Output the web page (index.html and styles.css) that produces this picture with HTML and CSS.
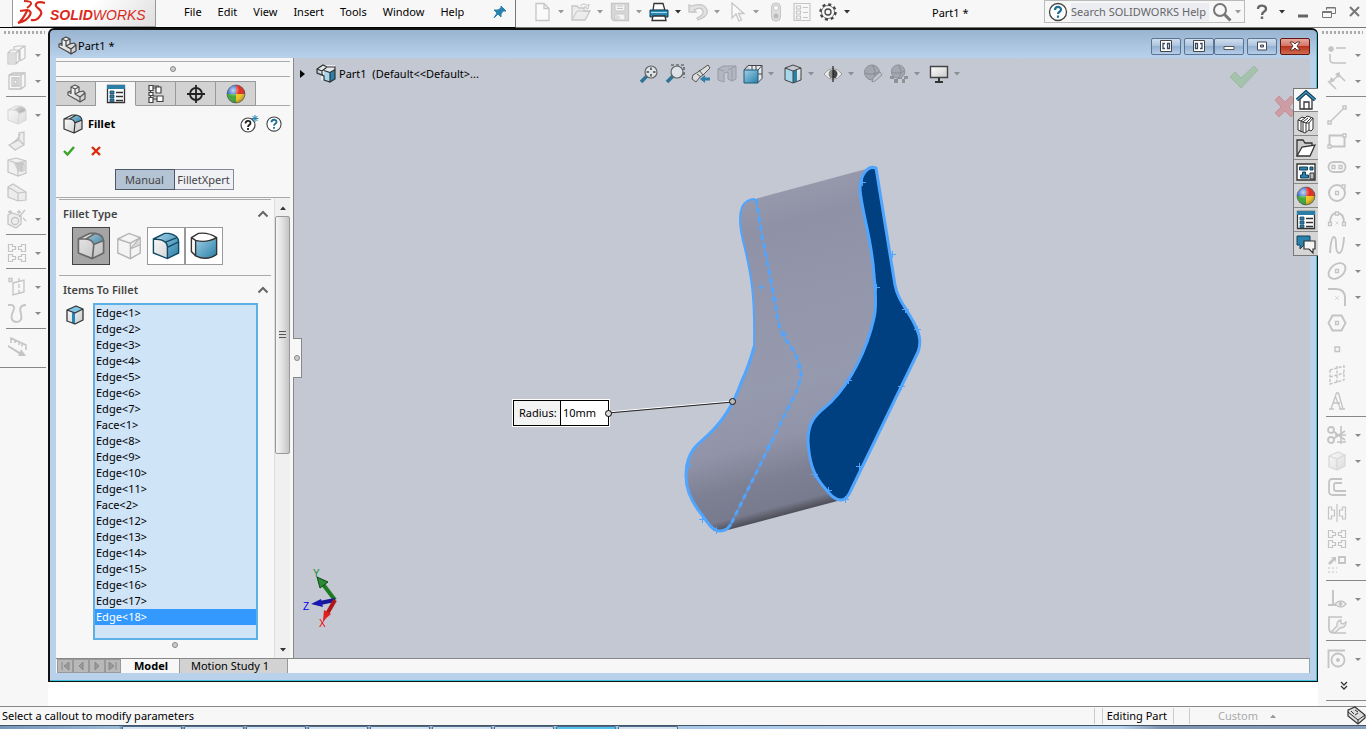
FILE: index.html
```html
<!DOCTYPE html>
<html lang="en">
<head>
    <meta charset="UTF-8">
    <meta name="viewport" content="width=device-width, initial-scale=1.0">
    <title>SOLIDWORKS - Part1 *</title>
    <link rel="stylesheet" href="styles.css">
</head>
<body>
    <!-- icon library -->
    <svg class="defs" width="0" height="0" aria-hidden="true">
        <defs>
            <linearGradient id="blue" x1="0" y1="0" x2="1" y2="1"><stop offset="0" stop-color="#9fd0e6"/><stop offset="1" stop-color="#2a7fa8"/></linearGradient>
            <linearGradient id="grey" x1="0" y1="0" x2="1" y2="1"><stop offset="0" stop-color="#ffffff"/><stop offset="1" stop-color="#c9c9c9"/></linearGradient>
            <radialGradient id="shine" cx=".35" cy=".3" r=".75"><stop offset="0" stop-color="#fff" stop-opacity=".75"/><stop offset=".5" stop-color="#fff" stop-opacity="0"/><stop offset="1" stop-color="#000" stop-opacity=".35"/></radialGradient>
        </defs>
        <symbol id="caret" viewBox="0 0 6 4"><path d="M0 0h6L3 3.500z" fill="currentColor"/></symbol>
        <symbol id="part" viewBox="0 0 20 20"><path d="M2 8l3-1V3l4-2 4 2v5l4-1 2 2v6l-5 3L2 12z" fill="url(#grey)"/><path d="M2 8l3-1V3l4-2 4 2v5l4-1 2 2v6l-5 3-3-2-9-5zM5 3l4 2 4-2M9 5v5l5 3v5M14 13l5-4M9 10l4-2M2 8l3 1.500V7" fill="none" stroke="currentColor" stroke-width="1.200" stroke-linejoin="round"/></symbol>
        <symbol id="fillet" viewBox="0 0 20 20"><path d="M1 5l8-4h4c3 .5 5.500 2 6 5v9l-8 4-10-4z" fill="url(#grey)"/><path d="M7 5l6-4c3 .5 5.500 2 6 5l-7 3C11.500 6.500 9.500 5.500 7 5z" fill="url(#blue)"/><path d="M1 5l8-4h4c3 .5 5.500 2 6 5v9l-8 4-10-4zM1 5h5c4 .3 5.500 2 6 4l7-3M12 9l-1 10M6.500 5L13 1" fill="none" stroke="currentColor" stroke-width="1.200" stroke-linejoin="round"/></symbol>
        <symbol id="cube" viewBox="0 0 20 20"><path d="M2 5l9-4 7 3v11l-8 4-8-3z" fill="url(#grey)"/><path d="M2 5l9-4 7 3v11l-8 4-8-3zM2 5l8 3 8-4M10 8v11" fill="none" stroke="currentColor" stroke-width="1.300" stroke-linejoin="round"/></symbol>
        <symbol id="edge" viewBox="0 0 20 20"><path d="M2 5l9-4 7 3v11l-8 4-8-3z" fill="url(#grey)"/><path d="M2 5l9-4 7 3-8 4z" fill="#7ec5e4"/><path d="M7 7.500l3 .5v11l-3-1z" fill="#2385b8"/><path d="M2 5l9-4 7 3v11l-8 4-8-3zM2 5l8 3 8-4" fill="none" stroke="#333" stroke-width="1.300" stroke-linejoin="round"/></symbol>
        <symbol id="props" viewBox="0 0 20 20"><path d="M1.500 1.500h17v17h-17z" fill="#fff" stroke="#333" stroke-width="1.300"/><path d="M1 1h18v4H1z" fill="#2b7ea6"/><path d="M4 7h4v3H4zM4 11h4v3H4zM4 15h4v2.500H4z" fill="#2b7ea6" stroke="#164b68" stroke-width=".8"/><path d="M10 8.500h7M10 12.500h7M10 16.500h7" stroke="#333" stroke-width="1.300"/></symbol>
        <symbol id="ball" viewBox="0 0 20 20"><circle cx="10" cy="10" r="9" fill="#2b62c9"/><path d="M10 1a9 9 0 0 1 9 9h-9z" fill="#e02a1c"/><path d="M10 10h9a9 9 0 0 1-9 9z" fill="#f2c51b"/><path d="M10 10v9a9 9 0 0 1-9-9z" fill="#3fa535"/><circle cx="10" cy="10" r="9" fill="url(#shine)" stroke="#555" stroke-width=".6"/></symbol>
        <symbol id="quad" viewBox="0 0 20 20"><path d="M1.500 1.500h4v2h3v3h-3v2h-4zM18.500 1.500h-4v2h-3v3h3v2h4zM1.500 11.500h4v2h3v3h-3v2h-4zM18.500 11.500h-4v2h-3v3h3v2h4z" fill="none" stroke="currentColor" stroke-width="1.200"/></symbol>
        <symbol id="help" viewBox="0 0 20 20"><circle cx="10" cy="10" r="8.500" fill="#fff" stroke="#444" stroke-width="1.300"/><path d="M7 8c0-4 6-4 6-.5 0 2.500-3 2-3 4.500M10 13.500v2.200" fill="none" stroke="currentColor" stroke-width="2.200"/></symbol>
        <symbol id="lens" viewBox="0 0 20 20"><path d="M8 12l-6 6" stroke="#2f7396" stroke-width="3.500"/><circle cx="12" cy="8" r="6" fill="#e2e8ee" fill-opacity=".8" stroke="#666" stroke-width="1.200"/></symbol>
        <symbol id="chev" viewBox="0 0 12 8"><path d="M1.500 6.500L6 2l4.500 4.500" fill="none" stroke="#666" stroke-width="2"/></symbol>
        <symbol id="sphere" viewBox="0 0 20 20"><circle cx="9" cy="8.500" r="7.500" fill="#a3a7b0" stroke="#8a8e97"/><path d="M2 9c5 2 10 1 14-1M9 1c4 4 4 11 0 15" fill="none" stroke="#858992"/></symbol>
    </svg>

    <header class="menubar">
        <div class="menus">
            <div class="logo">
                <svg width="30" height="26" viewBox="0 0 30 26" aria-hidden="true"><path d="M7 1q8 0 7 3-1 2-4 4" fill="none" stroke="#da291c" stroke-width="1.800"/><path d="M3 11l7-1q5 1 3 5-3 6-12 8 4-2 9-12M28 3q-7-2-9 1-1 2 3 5 4 3 1 7-3 5-9 4" fill="none" stroke="#da291c" stroke-width="2.200"/></svg>
                <span><b>SOLID</b>WORKS</span>
            </div>
            <nav>
                <button>File</button><button>Edit</button><button>View</button><button>Insert</button><button>Tools</button><button>Window</button><button>Help</button>
            </nav>
            <button class="pin" aria-label="Pin menu"><svg width="14" height="14" viewBox="0 0 14 14"><path d="M8 1l5 5-3 0-2 3 0 3-3-3-4 4 3-5-3-3 4 0 3-2z" fill="#2b83ad" stroke="#2b83ad"/></svg></button>
        </div>
        <div class="quick">
            <button class="off" aria-label="New"><svg class="ic" viewBox="0 0 20 20"><path d="M4 1.500h8l5 5v12H4zM12 1.500v5h5" fill="#fafafa" stroke="currentColor" stroke-width="1.300"/></svg></button><svg class="car"><use href="#caret"/></svg>
            <button class="off" aria-label="Open"><svg class="ic" viewBox="0 0 20 20"><path d="M1 18V4h5l2 2h5v3h6l-5 9z" fill="#ececec" stroke="currentColor" stroke-width="1.300"/><path d="M1 18L6 9h13M9 4q4-4 8 0l1-2-1 5-4-2h3" fill="none" stroke="currentColor"/></svg></button><svg class="car"><use href="#caret"/></svg>
            <button class="off" aria-label="Save"><svg class="ic" viewBox="0 0 20 20"><path d="M1.500 1.500h17v17h-15l-2-2z" fill="#d8d8d8" stroke="currentColor" stroke-width="1.300"/><path d="M5 2h10v7H5zM5 12h10v6H5z" fill="#f4f4f4" stroke="currentColor"/><path d="M7 4h6M7 6.500h6M7 13v5M9 14v3" stroke="currentColor"/></svg></button><svg class="car"><use href="#caret"/></svg>
            <button aria-label="Print"><svg class="ic" viewBox="0 0 20 20"><path d="M5 1.500h9l2 7H4z" fill="#fff" stroke="#333" stroke-width="1.300"/><path d="M1 8h18v7H1z" fill="#2987b2" stroke="#0f4059"/><path d="M2 10.500h16" stroke="#a9dcf0"/><path d="M4 14h12l1 4.500H3z" fill="#fff" stroke="#333" stroke-width="1.300"/></svg></button><svg class="car dark"><use href="#caret"/></svg>
            <button class="off" aria-label="Undo"><svg class="ic" viewBox="0 0 20 20"><path d="M1 3v7l7 0-2-2q8-4 9 1 1 4-6 7l1 2q11-4 9-10-3-8-15-4z" fill="#e3e3e3" stroke="currentColor" stroke-width="1.300"/></svg></button><svg class="car"><use href="#caret"/></svg>
            <button class="off" aria-label="Select"><svg class="ic" viewBox="0 0 20 20"><path d="M5 1v15l4-4 3 7 2.500-1-3-6.500H17z" fill="#fafafa" stroke="currentColor" stroke-width="1.300"/></svg></button><svg class="car"><use href="#caret"/></svg>
            <button class="off gap" aria-label="Rebuild"><svg class="ic" viewBox="0 0 20 20"><rect x="5.500" y="1" width="9" height="18" rx="4" fill="#dedede" stroke="currentColor"/><circle cx="10" cy="6" r="2.500" fill="#fff" stroke="currentColor"/><circle cx="10" cy="14" r="2.500" fill="#bbb"/></svg></button>
            <button class="off gap" aria-label="File properties"><svg class="ic" viewBox="0 0 20 20"><path d="M2 1.500h16v17H2zM4.500 4h4v3h-4zM4.500 9h4v3h-4zM4.500 14h4v3h-4zM11 5.500h5M11 10.500h5M11 15.500h5" fill="none" stroke="currentColor" stroke-width="1.200"/></svg></button>
            <button class="gear" aria-label="Options"><svg class="ic" viewBox="0 0 20 20"><circle cx="10" cy="10" r="7.500" fill="none" stroke="#444" stroke-width="2.400" stroke-dasharray="3 2.890"/><circle cx="10" cy="10" r="6.300" fill="#fff" stroke="#444"/><circle cx="10" cy="10" r="6" fill="#f7f7f7"/><circle cx="10" cy="10" r="3" fill="none" stroke="#444" stroke-width="1.300"/></svg></button><svg class="car dark"><use href="#caret"/></svg>
        </div>
        <div class="doc-name">Part1 *</div>
        <div class="search">
            <svg class="ic" color="#1e6f97"><use href="#help"/></svg>
            <input type="text" placeholder="Search SOLIDWORKS Help" aria-label="Search SOLIDWORKS Help">
            <button aria-label="Search"><svg class="ic" viewBox="0 0 20 20"><circle cx="8" cy="8" r="6" fill="none" stroke="#777" stroke-width="2"/><path d="M12.500 12.500l6 6" stroke="#777" stroke-width="3"/></svg></button>
            <svg class="car"><use href="#caret"/></svg>
        </div>
        <div class="app-buttons">
            <button aria-label="Help"><svg width="12" height="16" viewBox="0 0 12 16"><path d="M2 5c0-5 8-4 8 0 0 3-4 2-4 6M6 12.500V15" fill="none" stroke="#666" stroke-width="2.400"/></svg></button>
            <svg class="car dark"><use href="#caret"/></svg>
            <button aria-label="Minimize"><svg width="14" height="14" viewBox="0 0 14 14"><path d="M2 11h10" stroke="#666" stroke-width="3"/></svg></button>
            <button aria-label="Restore"><svg width="14" height="14" viewBox="0 0 14 14"><path d="M4.500 5V2.500h9v6H10M4 3h9M.5 6.500h9v6h-9zM0 7.500h9" fill="none" stroke="#777"/></svg></button>
            <button aria-label="Close"><svg width="14" height="14" viewBox="0 0 14 14"><path d="M2 2l9 9M11 2l-9 9" stroke="#777" stroke-width="2"/></svg></button>
        </div>
    </header>

    <div class="workspace">
        <aside class="tools left" aria-label="Features">
            <div class="grip"></div>
            <button aria-label="Extruded boss"><svg class="ic" viewBox="0 0 20 20"><path d="M2 9h6v9H2z" fill="#ddd"/><path d="M1 8l3-3h8v11l-3 3H1zM1 8h8v11M9 8l3-3M7 5V2l4-1h7v12l-5 3M13 4v11M13 4l5-3" fill="none" stroke="currentColor" stroke-width="1.200"/></svg></button>
            <button aria-label="Extruded cut"><svg class="ic" viewBox="0 0 20 20"><path d="M2 4l4-2h12v13l-4 3H2zM2 4h12v14M14 4l4-2M5 7h7v8H5zM7 9h3v4H7z" fill="none" stroke="currentColor" stroke-width="1.300"/></svg></button>
            <hr>
            <button aria-label="Fillet"><svg class="ic pale"><use href="#fillet"/></svg></button>
            <button class="solo" aria-label="Rib"><svg class="ic" viewBox="0 0 20 20"><path d="M2 14l10-5V2l5-1v13l-9 5zM2 14l6 5M12 9l5 5M5 12q6-2 8-9" fill="#ececec" stroke="currentColor" stroke-width="1.200"/></svg></button>
            <button class="solo" aria-label="Shell"><svg class="ic" viewBox="0 0 20 20"><path d="M1 3l8-2 10 3v12l-8 3-10-4z" fill="#f0f0f0"/><path d="M7 6l9-2v9l-5 2z" fill="#cfcfcf"/><path d="M1 3l8-2 10 3v12l-8 3-10-4zM1 3l10 4v12M11 7l8-3M14 7.500l3-1v7l-3 1z" fill="none" stroke="currentColor" stroke-width="1.200"/></svg></button>
            <button class="solo" aria-label="Draft"><svg class="ic" viewBox="0 0 20 20"><path d="M1 4l5-3 13 8v8l-8 1-10-4zM1 4l10 6v8M11 10l8-1" fill="#ececec" stroke="currentColor" stroke-width="1.200"/></svg></button>
            <button aria-label="Hole wizard"><svg class="ic" viewBox="0 0 20 20"><path d="M1 6l4-2 9 3v8l-5 4-8-4zM12 8l6-7M3 1v4M1 3h4M12 1v4M10 3h4M16 9l3 3" fill="#eee" stroke="currentColor" stroke-width="1.300"/><circle cx="8" cy="12" r="3.500" fill="none" stroke="currentColor" stroke-width="1.300"/></svg></button>
            <hr>
            <button aria-label="Linear pattern"><svg class="ic"><use href="#quad"/></svg></button>
            <hr>
            <button aria-label="Reference geometry"><svg class="ic" viewBox="0 0 20 20"><path d="M2 1.500h3v3H2zM6 6l11-3v12L6 18z" fill="none" stroke="currentColor" stroke-width="1.300"/><path d="M12 1v18" stroke="currentColor" stroke-width="1.300" stroke-dasharray="4 2"/></svg></button>
            <button aria-label="Curves"><svg class="ic" viewBox="0 0 20 20"><path d="M1 2q7-1 6 4l-2 5q-2 7 4 8 7 0 5-8-3-9 5-9" fill="none" stroke="currentColor" stroke-width="1.800"/></svg></button>
            <hr>
            <button class="solo" aria-label="Instant3D"><svg class="ic" viewBox="0 0 20 20"><path d="M4 6V1l15 7v5M8 3v3M12 5v3M15 6.500v3" fill="none" stroke="currentColor" stroke-width="1.500"/><path d="M1 8l12 7 1-3 5 7-8 0 1-2L1 10z" fill="currentColor"/></svg></button>
            <hr class="wide">
        </aside>

        <main class="doc">
            <div class="title">
                <svg class="ic" color="#444"><use href="#part"/></svg>
                <h1>Part1 *</h1>
                <div class="win-buttons">
                    <button class="lone" aria-label="Pane left"><svg width="14" height="14" viewBox="0 0 14 14"><path d="M1.500 1.500h11v11h-11z" fill="#fff" stroke="#444"/><path d="M6 4.500H4v5h2M8.500 4.500h2v5h-2z" fill="none" stroke="#3a4a62" stroke-width="1.300"/></svg></button>
                    <button aria-label="Pane right"><svg width="14" height="14" viewBox="0 0 14 14"><path d="M1.500 1.500h11v11h-11z" fill="#fff" stroke="#444"/><path d="M8 4.500h2v5H8M3.500 4.500h2v5h-2z" fill="none" stroke="#3a4a62" stroke-width="1.300"/></svg></button>
                    <button aria-label="Minimize document"><svg width="14" height="14" viewBox="0 0 14 14"><path d="M2 7.500h10v3H2z" fill="#fff" stroke="#555"/></svg></button>
                    <button class="max" aria-label="Maximize document"><svg width="14" height="14" viewBox="0 0 14 14"><path d="M2.500 3h9v8h-9zM5.500 6h3v2h-3z" fill="#fff" fill-rule="evenodd" stroke="#445"/></svg></button>
                    <button class="shut" aria-label="Close document"><svg width="14" height="14" viewBox="0 0 14 14"><path d="M2 3h3l2 2 2-2h3L9 7l3 4H9L7 9l-2 2H2l3-4z" fill="#fff" stroke="#5a3535"/></svg></button>
                </div>
            </div>

            <div class="split">
                <section class="panel">
                    <div class="handle"><i></i></div>
                    <div class="tabs" role="tablist">
                        <button role="tab" aria-label="Feature tree"><svg class="ic" color="#555"><use href="#part"/></svg></button>
                        <button role="tab" class="on" aria-label="Property manager"><svg class="ic"><use href="#props"/></svg></button>
                        <button role="tab" aria-label="Configurations"><svg class="ic" viewBox="0 0 20 20"><path d="M4.500 1v18M4.500 4h7M4.500 15h7" fill="none" stroke="#444" stroke-width="1.200"/><path d="M3 1.500h4v5H3zM3 8.500h4v3H3zM3 13.500h4v5H3zM10 3h5v6h-5zM11 12h6v5.500h-6z" fill="#fff" stroke="#444" stroke-width="1.200"/><path d="M7 2h6v1M7 12h3" fill="none" stroke="#444"/></svg></button>
                        <button role="tab" aria-label="Dimensions"><svg class="ic" viewBox="0 0 20 20"><circle cx="10" cy="10" r="6" fill="none" stroke="#222" stroke-width="1.800"/><path d="M10 1v18M1 10h18" stroke="#222" stroke-width="1.800"/></svg></button>
                        <button role="tab" aria-label="Display"><svg class="ic"><use href="#ball"/></svg></button>
                    </div>
                    <div class="feature">
                        <svg class="ic" color="#333"><use href="#fillet"/></svg>
                        <h2>Fillet</h2>
                        <button aria-label="What's new"><svg class="ic" viewBox="0 0 20 20"><circle cx="9" cy="11" r="7" fill="#fff" stroke="#444" stroke-width="1.200"/><path d="M6.500 9.500c0-3.500 5-3.500 5-.5 0 2-2.500 2-2.500 4M9 14v2" fill="none" stroke="#222" stroke-width="1.800"/><path d="M16 1v7M12.500 4.500h7M13.500 2l5 5M18.500 2l-5 5" stroke="#1e7fae"/></svg></button>
                        <button aria-label="Fillet help"><svg class="ic" color="#1e6f97" viewBox="-2 -2 24 24"><use href="#help" width="20" height="20"/></svg></button>
                    </div>
                    <div class="confirm">
                        <button aria-label="OK"><svg width="12" height="12" viewBox="0 0 12 12"><path d="M1 6l3.500 3.500L11 2" fill="none" stroke="#3aa226" stroke-width="2.400"/></svg></button>
                        <button aria-label="Cancel"><svg width="12" height="12" viewBox="0 0 12 12"><path d="M2 2l8 8M10 2l-8 8" stroke="#dd2b0d" stroke-width="2.400"/></svg></button>
                    </div>
                    <div class="mode">
                        <button class="on">Manual</button><button>FilletXpert</button>
                    </div>
                    <div class="scroll">
                        <div class="groups">
                            <div class="group">
                                <h3>Fillet Type <svg width="12" height="8"><use href="#chev"/></svg></h3>
                                <div class="types">
                                    <button class="on" aria-label="Constant size fillet"><svg color="#555"><use href="#fillet"/></svg></button>
                                    <button class="flat" aria-label="Variable size fillet"><svg viewBox="0 0 20 20"><path d="M2 5l8-4 8 3v11l-7 4-9-4zM2 5l9 3 7-4-7 8 7-3" fill="#f4f4f4" stroke="#b5b5b5"/><path d="M11 8v11" stroke="#b5b5b5"/><path d="M11 11q4-2 6-6v4z" fill="#d5d5d5"/></svg></button>
                                    <button aria-label="Face fillet"><svg viewBox="0 0 20 20"><path d="M1 5l8-4h3l7 5v9l-8 4-10-4z" fill="url(#grey)"/><path d="M3 4l6-3h3c5 1 7 3 7 6v8l-8 4v-8C11 7 8 4.500 3 4z" fill="url(#blue)"/><path d="M1 5l8-4h3c5 1 7 3 7 6v8l-8 4-10-4zM1 5c7 0 10 2 10 6v8M11 11l8-4M10 7l8-3" fill="none" stroke="#124a66"/></svg></button>
                                    <button aria-label="Full round fillet"><svg viewBox="0 0 20 20"><path d="M1 4l5-3q7-1 13 3v12q-7 5-15 1l-3-3z" fill="#fff"/><path d="M4 6q7 2 15-2v12q-7 5-15 1z" fill="url(#blue)"/><path d="M1 4l5-3q7-1 13 3v12q-7 5-15 1l-3-3zM1 4l3 2v11M4 6q8 2 15-2" fill="none" stroke="#333"/></svg></button>
                                </div>
                            </div>
                            <div class="group items">
                                <h3><label for="edges">Items To Fillet</label> <svg width="12" height="8"><use href="#chev"/></svg></h3>
                                <div class="pick">
                                    <svg class="ic"><use href="#edge"/></svg>
                                    <select id="edges" multiple>
                                        <option>Edge&lt;1&gt;</option>
                                        <option>Edge&lt;2&gt;</option>
                                        <option>Edge&lt;3&gt;</option>
                                        <option>Edge&lt;4&gt;</option>
                                        <option>Edge&lt;5&gt;</option>
                                        <option>Edge&lt;6&gt;</option>
                                        <option>Edge&lt;7&gt;</option>
                                        <option>Face&lt;1&gt;</option>
                                        <option>Edge&lt;8&gt;</option>
                                        <option>Edge&lt;9&gt;</option>
                                        <option>Edge&lt;10&gt;</option>
                                        <option>Edge&lt;11&gt;</option>
                                        <option>Face&lt;2&gt;</option>
                                        <option>Edge&lt;12&gt;</option>
                                        <option>Edge&lt;13&gt;</option>
                                        <option>Edge&lt;14&gt;</option>
                                        <option>Edge&lt;15&gt;</option>
                                        <option>Edge&lt;16&gt;</option>
                                        <option>Edge&lt;17&gt;</option>
                                        <option selected>Edge&lt;18&gt;</option>
                                    </select>
                                </div>
                                <i class="dot"></i>
                            </div>
                        </div>
                        <div class="bar">
                            <svg class="car dark up"><use href="#caret"/></svg>
                            <div class="thumb"><i></i></div>
                            <svg class="car dark"><use href="#caret"/></svg>
                        </div>
                    </div>
                    <button class="splitter" aria-label="Collapse panel"><i></i></button>
                </section>

                <section class="view">
                    <svg class="model" aria-label="Fillet preview">
                        <defs>
                            <linearGradient id="body" gradientUnits="userSpaceOnUse" x1="755" y1="199" x2="835" y2="501">
                                <stop offset="0" stop-color="#9698ab"/><stop offset=".1" stop-color="#8f92a6"/><stop offset=".3" stop-color="#9396aa"/><stop offset=".6" stop-color="#969aaf"/><stop offset=".76" stop-color="#9194a8"/><stop offset=".88" stop-color="#7d7f92"/><stop offset=".97" stop-color="#787a8d"/><stop offset="1.020" stop-color="#505059"/>
                            </linearGradient>
                        </defs>
                        <g transform="translate(-294 -58)">
                            <path fill="url(#body)" d="M755 199L870 168L878 300L845 499L724 531C711 531 706 519 699 511C690 499 686 488 686 476C686 463 689 453 697 445L709 434C725 419 735 400 741 383Q749 366 754 347C755 300 752 277 744 245C740 230 738 217 742 207Q746 199 755 199Z"/>
                            <path fill="none" stroke="#50a5ff" stroke-width="2" d="M755 199Q746 199 742 207C738 217 740 230 744 245C752 277 755 300 754 347"/>
                            <path fill="none" stroke="#50a5ff" stroke-width="3" d="M754 347Q749 366 741 383C735 400 725 419 709 434L697 445C689 453 686 463 686 476C686 488 690 499 699 511C706 519 711 531 720 531Q727 531 731 524"/>
                            <path fill="none" stroke="#50a5ff" d="M756 199L762 235L772 287C777 311 777 328 786 340C796 352 800 364 801 374Q800 386 791 402L731 524"/>
                            <path fill="none" stroke="#50a5ff" stroke-width="3" stroke-dasharray="5 4" d="M756 199L762 235L772 287C777 311 777 328 786 340C796 352 800 364 801 374Q800 386 791 402L731 524"/>
                            <path fill="#004080" stroke="#50a5ff" stroke-width="3" stroke-linejoin="round" d="M876 168C868 165 860 174 860 190C862 213 872 240 874 275C876 295 876 310 874 318C867 350 850 383 831 402C819 413 808 418 808 441C809 461 813 474 823 486C830 494 834 500 841 500Q847 500 851 490L903 383L918 352C922 341 919 333 914 323C905 306 898 300 895 285Z"/>
                            <path fill="none" stroke="#50a5ff" d="M859 182.500h7m-3.500-3.500v7M889 254.500h7m-3.500-3.500v7M873 287.500h7m-3.500-3.500v7M902 309.500h7m-3.500-3.500v7M914 329.500h7m-3.500-3.500v7M758 287.500h7m-3.500-3.500v7M771 299.500h7m-3.500-3.500v7M781 334.500h7m-3.500-3.500v7M795 366.500h7m-3.500-3.500v7M765 446.500h7m-3.500-3.500v7M845 380.500h7m-3.500-3.500v7M898 386.500h7m-3.500-3.500v7M856 466.500h7m-3.500-3.500v7M811 474.500h7m-3.500-3.500v7M825 490.500h7m-3.500-3.500v7M842 499.500h7m-3.500-3.500v7M685 465.500h7m-3.500-3.500v7M699 519.500h7m-3.500-3.500v7M713 530.500h7m-3.500-3.500v7"/>
                            <path d="M608 412L733 401" stroke="#fff"/><path d="M608 413L733 402" stroke="#222"/>
                            <circle cx="732.500" cy="401.500" r="3" fill="#bbb" stroke="#111"/>
                            <!-- origin triad -->
                            <path d="M335 600L322 583" stroke="#1c7a22" stroke-width="4"/><path d="M317 577l11 5-8 6z" fill="#2c8a35" stroke="#0c4a12"/>
                            <path d="M335 600L320 603" stroke="#16169a" stroke-width="4"/><path d="M311 604l10-5 2 8z" fill="#1818b0"/>
                            <path d="M335 600L327 614" stroke="#b01818" stroke-width="4"/><path d="M323 621l1-11 7 4z" fill="#e01f1f"/>
                            <g class="axes"><text x="313" y="577" fill="#17911d">Y</text><text x="303" y="610" fill="#0000f0">Z</text><text x="319" y="627" fill="#f00000">X</text></g>
                        </g>
                    </svg>
                    <div class="hud">
                        <div class="tree">
                            <svg class="arrow" viewBox="0 0 5 8"><path d="M0 0l5 4-5 4z"/></svg>
                            <svg class="ic" viewBox="0 0 20 20" color="#333"><path d="M1 5l7-4h11v13l-5 4-9-2V9z" fill="#e6eaef"/><path d="M8 7l6 2v9l-6-2z" fill="#a8d7ec"/><path d="M14 9l5-3v9l-5 3z" fill="#2980aa"/><path d="M1 5l6-4 4 2h8v12l-5 3-6-2v-4l-7-3zM1 5l5 2 5-4M6 7v4M8 6.500l6 2 5-3M14 9v9" fill="none" stroke="#333" stroke-width="1.200"/></svg>
                            <span>Part1&nbsp; (Default&lt;&lt;Default&gt;...</span>
                        </div>
                        <div class="heads">
                            <button aria-label="Zoom to fit"><svg class="ic" viewBox="0 0 20 20"><use href="#lens" width="20" height="20"/><path d="M12 3.500v9M7.500 8h9" stroke="#444" stroke-width="1.500" stroke-dasharray="2.500 4 2.500"/></svg></button>
                            <button aria-label="Zoom to area"><svg class="ic" viewBox="0 0 20 20"><path d="M6 1h13v13" fill="none" stroke="#444" stroke-width="1.200" stroke-dasharray="3 2"/><use href="#lens" width="20" height="20"/></svg></button>
                            <button aria-label="Previous view"><svg class="ic" viewBox="0 0 20 20"><path d="M2 11l5-3L17 1l2 3-7 7-3 2-4 5-4-3z" fill="#ddd" stroke="#555"/><path d="M8 6l4 5M6 10l4 3" stroke="#555"/><path d="M9 15l5-4v2.500h5v3h-5V19z" fill="#2f7fa8"/></svg></button>
                            <button aria-label="Section view"><svg class="ic" viewBox="0 0 20 20"><path d="M1 5l5-3h13v13l-4 2-4-2V8l-4 1v9l-6-2zM1 5l6 2M11 6l4-2 4-2M15 5v12" fill="#b3b7c1" stroke="#989ca6"/></svg></button>
                            <button aria-label="View orientation"><svg class="ic" viewBox="0 0 20 20"><path d="M5 1.500h14v13l-4 4M5 1.500L1 6M19 1.500L15 6M9 1v5M13 1v8M15 10h4" fill="#e6e9ee" stroke="#444"/><path d="M1 6h14v13H1z" fill="url(#blue)" stroke="#1d5878"/></svg></button><svg class="car"><use href="#caret"/></svg>
                            <button aria-label="Display style"><svg class="ic" viewBox="0 0 20 20"><path d="M2 4l8 3v12l-8-3z" fill="#a8d7ec"/><path d="M10 7l8-3v12l-8 3z" fill="url(#grey)"/><path d="M10 7l4-1.500v12L10 19z" fill="#2980aa"/><path d="M2 4l8-3 8 3v12l-8 3-8-3zM2 4l8 3 8-3M10 7v12" fill="none" stroke="#444"/></svg></button><svg class="car"><use href="#caret"/></svg>
                            <button aria-label="Hide or show"><svg class="ic" viewBox="0 0 20 20"><path d="M1 10q9-11 18 0-9 11-18 0z" fill="#eee" stroke="#999"/><path d="M10 5.500a4.500 4.500 0 0 0 0 9z" fill="#888"/><path d="M10 5.500a4.500 4.500 0 0 1 0 9z" fill="#444"/><path d="M10 2v16" stroke="#222" stroke-width="1.200"/></svg></button><svg class="car"><use href="#caret"/></svg>
                            <button aria-label="Edit appearance"><svg class="ic" viewBox="0 0 20 20"><use href="#sphere" width="20" height="20"/><path d="M9 18l1-4 7-6 2 3-7 6z" fill="#c1c4cc" stroke="#8f939c"/></svg></button>
                            <button aria-label="Apply scene"><svg class="ic" viewBox="0 0 20 20"><path d="M1 12h18v7H1z" fill="#c8cbd2"/><path d="M1 12h4v3H1zM9 12h4v3H9zM15 12h4v3h-4zM5 15h4v4H5zM13 15h3v4h-3z" fill="#8e929b"/><use href="#sphere" x="1" width="18" height="18"/></svg></button><svg class="car"><use href="#caret"/></svg>
                            <button aria-label="View settings"><svg class="ic" viewBox="0 0 20 20"><path d="M1.500 2.500h17v11h-17z" fill="url(#grey)" stroke="#444" stroke-width="1.400"/><path d="M10 14v4M6 18h8" stroke="#333" stroke-width="2"/></svg></button><svg class="car"><use href="#caret"/></svg>
                        </div>
                    </div>
                    <div class="callout">
                        <label for="radius">Radius:</label><input id="radius" type="text" value="10mm">
                        <i></i>
                    </div>
                    <button class="accept" aria-label="Accept"><svg width="30" height="24" viewBox="0 0 30 24"><path d="M1 12l5-5 6 6L25 1l4 4-17 18z" fill="#a5c2ac" stroke="#9bbaa2"/></svg></button>
                    <button class="reject" aria-label="Reject"><svg width="26" height="26" viewBox="0 0 26 26"><path d="M2 6l4-4 6 6 6-6 4 4-6 7 6 6-4 4-6-6-6 6-4-4 6-6z" fill="#cc9da4" stroke="#c59098"/></svg></button>
                </section>

                <nav class="taskpane" aria-label="Task pane">
                    <button class="on" aria-label="Resources"><svg class="ic" viewBox="0 0 20 20"><path d="M4 9v10h12V9l-6-6z" fill="#fff" stroke="#333" stroke-width="1.300"/><path d="M8 19v-7h5v7" fill="none" stroke="#333" stroke-width="1.300"/><path d="M1 10l9-8 9 8" fill="none" stroke="#12405a" stroke-width="3.500"/><path d="M1 10l9-8 9 8" fill="none" stroke="#4499c0" stroke-width="1.300"/></svg></button>
                    <button aria-label="Design library"><svg class="ic" viewBox="0 0 20 20"><path d="M2 6l9-4 6 1v12l-8 4-7-3z" fill="#fff"/><path d="M2 6l4-3 3 1 2-2 6 2v11l-2 2-2-1-4 3-7-3zM2 6l3 1v11M5 7l4-3M5 7l2 1v10M7 8l5-4M7 8l3 1v9M10 9l5-5M10 9l3 0v7M13 9l4-5" fill="none" stroke="#333"/></svg></button>
                    <button aria-label="File explorer"><svg class="ic" viewBox="0 0 20 20"><path d="M1 18V2h6l2 3h7v3" fill="#ccc" stroke="#333" stroke-width="1.300"/><path d="M1 18L6 9l13-2-5 11z" fill="#fff" stroke="#333" stroke-width="1.300"/></svg></button>
                    <button aria-label="View palette"><svg class="ic" viewBox="0 0 20 20"><path d="M1 2h18v16H1z" fill="#fff" stroke="#333" stroke-width="1.400"/><path d="M3.500 5h8v3h-8zM14 5h3v3h-3zM6.500 10h3v3h3v3h-8v-3h2z" fill="#2b83ad" stroke="#153f57"/><path d="M14 11h4v6h-4z" fill="#bbb" stroke="#333"/></svg></button>
                    <button aria-label="Appearances"><svg class="ic"><use href="#ball"/></svg></button>
                    <button aria-label="Custom properties"><svg class="ic"><use href="#props"/></svg></button>
                    <button aria-label="Forum"><svg class="ic" viewBox="0 0 20 20"><path d="M1 2h13v9H8l-4 4v-4H1z" fill="#2b83ad" stroke="#153f57"/><path d="M8 7h11v8h-2v4l-4-4H8z" fill="#f4f4f4" stroke="#333" stroke-width="1.200"/></svg></button>
                </nav>
            </div>

            <footer class="sheets">
                <div class="steps">
                    <button aria-label="First"><svg viewBox="0 0 12 12"><path d="M3 2v8M10 2L5 6l5 4z"/></svg></button><button aria-label="Previous"><svg viewBox="0 0 12 12"><path d="M8 2L4 6l4 4z"/></svg></button><button aria-label="Next"><svg viewBox="0 0 12 12"><path d="M4 2l4 4-4 4z"/></svg></button><button aria-label="Last"><svg viewBox="0 0 12 12"><path d="M9 2v8M2 2l5 4-5 4z"/></svg></button>
                </div>
                <button class="sheet on">Model</button>
                <button class="sheet">Motion Study 1</button>
            </footer>
        </main>

        <aside class="tools right" aria-label="Sketch">
            <div class="grip"></div>
            <button aria-label="Sketch"><svg class="ic" viewBox="0 0 20 20"><path d="M1 4h6M4 1v6M2 2l4 4M6 2L2 6M9 3h10M3 9v5q0 4 4 4h12" fill="none" stroke="currentColor" stroke-width="1.600"/></svg></button>
            <button aria-label="Smart dimension"><svg class="ic" viewBox="0 0 20 20"><path d="M1 10l8 8M10 2l8 8M5 10l7-6" fill="none" stroke="currentColor" stroke-width="1.600"/><path d="M2 12l2-6 4 4zM13 1l-1 6-4-4z" fill="currentColor"/></svg></button>
            <hr>
            <button aria-label="Line"><svg class="ic" viewBox="0 0 20 20"><path d="M4 16L16 4M1 16h3v3H1zM16 1h3v3h-3z" fill="none" stroke="currentColor" stroke-width="1.500"/></svg></button>
            <button aria-label="Rectangle"><svg class="ic" viewBox="0 0 20 20"><path d="M2.500 4.500h15v11h-15z" fill="none" stroke="currentColor" stroke-width="1.900"/><path d="M1 14h3v3H1zM16 3h3v3h-3z" fill="#fff" stroke="currentColor" stroke-width="1.300"/></svg></button>
            <button aria-label="Slot"><svg class="ic" viewBox="0 0 20 20"><rect x="1.500" y="5" width="17" height="10" rx="5" fill="none" stroke="currentColor" stroke-width="1.900"/><path d="M5 8.500h3v3H5zM12 8.500h3v3h-3z" fill="none" stroke="currentColor" stroke-width="1.300"/></svg></button>
            <button aria-label="Circle"><svg class="ic" viewBox="0 0 20 20"><circle cx="10" cy="10" r="8" fill="none" stroke="currentColor" stroke-width="1.900"/><path d="M8.500 8.500h3v3h-3zM15 2h3v3h-3z" fill="#fff" stroke="currentColor" stroke-width="1.300"/></svg></button>
            <button aria-label="Arc"><svg class="ic" viewBox="0 0 20 20"><path d="M3 14q0-10 7-10t7 10" fill="none" stroke="currentColor" stroke-width="1.900"/><path d="M1.500 13.500h3v3h-3zM15.500 13.500h3v3h-3zM8.500 3h3v3h-3z" fill="#fff" stroke="currentColor" stroke-width="1.300"/><path d="M8.500 12.500l3 3M11.500 12.500l-3 3" stroke="currentColor" stroke-width=".6"/></svg></button>
            <button aria-label="Spline"><svg class="ic" viewBox="0 0 20 20"><path d="M3 18Q4 2 7 2q2 0 2 7 0 9 3 9 4 0 5-16" fill="none" stroke="currentColor" stroke-width="1.900"/></svg></button>
            <button aria-label="Ellipse"><svg class="ic" viewBox="0 0 20 20"><ellipse cx="10" cy="10" rx="9.500" ry="6.500" transform="rotate(-40 10 10)" fill="none" stroke="currentColor" stroke-width="1.900"/><path d="M8.500 8.500h3v3h-3z" fill="none" stroke="currentColor" stroke-width="1.300"/></svg></button>
            <button aria-label="Sketch fillet"><svg class="ic" viewBox="0 0 20 20"><path d="M1 2h8q9 0 9 9v8" fill="none" stroke="currentColor" stroke-width="2"/><path d="M8 9l4 4M12 9l-4 4" stroke="currentColor" stroke-width=".6"/></svg></button>
            <button class="solo" aria-label="Polygon"><svg class="ic" viewBox="0 0 20 20"><path d="M5.500 2.500h9l4 7.500-4 7.500h-9L1.500 10z" fill="none" stroke="currentColor" stroke-width="1.900"/><path d="M8.500 8.500h3v3h-3z" fill="none" stroke="currentColor" stroke-width="1.300"/></svg></button>
            <button class="solo" aria-label="Point"><svg class="ic" viewBox="0 0 20 20"><path d="M8 8h4.500v4.500H8z" fill="none" stroke="currentColor" stroke-width="1.400"/></svg></button>
            <button class="solo" aria-label="Plane"><svg class="ic" viewBox="0 0 20 20"><path d="M3 5l14-4v14L3 19zM10 1v18M3 12l14-4" fill="none" stroke="currentColor" stroke-width="1.400" stroke-dasharray="3 1.500"/></svg></button>
            <button class="solo" aria-label="Text"><svg class="ic" viewBox="0 0 20 20"><path d="M2 18h5M12 18h6M4 18L9.500 2h2L16 18M6 12h7M8.500 6l5 12" fill="none" stroke="currentColor" stroke-width="1.300"/></svg></button>
            <hr>
            <button aria-label="Trim"><svg class="ic" viewBox="0 0 20 20"><circle cx="4" cy="5" r="3" fill="none" stroke="currentColor" stroke-width="1.800"/><circle cx="4" cy="15" r="3" fill="none" stroke="currentColor" stroke-width="1.800"/><path d="M6 6l12 9M6 14L18 6M14 1v18M8 10h11M10 17h9" stroke="currentColor" stroke-width="1.600"/></svg></button>
            <button aria-label="Convert entities"><svg class="ic pale"><use href="#cube"/></svg></button>
            <button class="solo" aria-label="Offset"><svg class="ic" viewBox="0 0 20 20"><path d="M15 2H5Q2 2 2 6v8q0 4 4 4h13M15 6H9Q7 6 7 8v4q0 2 2 2h10" fill="none" stroke="currentColor" stroke-width="1.800"/></svg></button>
            <button class="solo" aria-label="Mirror"><svg class="ic" viewBox="0 0 20 20"><path d="M10 1v18M1.500 4h3v3h3v6h-3v3h-3zM18.500 4h-3v3h-3v6h3v3h3z" fill="none" stroke="currentColor" stroke-width="1.200"/></svg></button>
            <button aria-label="Sketch pattern"><svg class="ic"><use href="#quad"/></svg></button>
            <button aria-label="Move entities"><svg class="ic" viewBox="0 0 20 20"><path d="M12 2h6v6h-6z" fill="none" stroke="currentColor" stroke-width="1.800"/><path d="M1 8l5-5-3-1h6v6L8 5 3 10z" fill="currentColor"/><path d="M1 13h9M1 17h9" stroke="currentColor" stroke-width="2" stroke-dasharray="2 2" opacity=".5"/></svg></button>
            <hr>
            <button aria-label="Relations"><svg class="ic" viewBox="0 0 20 20"><path d="M6 1v15M1 16h8" fill="none" stroke="currentColor" stroke-width="1.900"/><path d="M8 15q6-6 11 0-5 6-11 0z" fill="none" stroke="currentColor" stroke-width="1.500"/><circle cx="13.500" cy="15" r="2" fill="currentColor"/></svg></button>
            <button class="solo" aria-label="Repair sketch"><svg class="ic" viewBox="0 0 20 20"><path d="M15 2H2v11q0 5 5 5h12" fill="none" stroke="currentColor" stroke-width="1.700"/><path d="M5 16l5-5q-1-5 4-6v3l2 1 3-2q0 6-6 6l-5 5z" fill="#eee" stroke="currentColor" stroke-width="1.300"/></svg></button>
            <hr>
            <button aria-label="Quick snaps"><svg class="ic" viewBox="0 0 20 20"><path d="M1.500 19V1.500H18" fill="none" stroke="currentColor" stroke-width="1.800"/><circle cx="11" cy="11" r="6.500" fill="none" stroke="currentColor" stroke-width="1.800"/><circle cx="11" cy="11" r="2" fill="currentColor"/></svg></button>
            <button class="more" aria-label="More"><svg width="8" height="10" viewBox="0 0 8 10"><path d="M1 1l3 3 3-3M1 5l3 3 3-3" fill="none" stroke="#333" stroke-width="1.300"/></svg></button>
            <hr class="last">
        </aside>
    </div>

    <footer class="status">
        <span class="hint">Select a callout to modify parameters</span>
        <span class="cell empty"></span>
        <span class="cell">Editing Part</span>
        <span class="cell empty"></span>
        <button class="cell units">Custom <svg class="car up"><use href="#caret"/></svg></button>
        <button class="tag" aria-label="Tags"><svg class="ic" viewBox="0 0 20 20"><path d="M2 4l7-3 10 8v3l-7 6L2 10z" fill="#ddd" stroke="#333" stroke-width="1.200"/><path d="M2 6l10 8 7-5M12 14v4M5 5l3 3M9 4l3 2M9 9l3-2" fill="none" stroke="#333"/></svg></button>
    </footer>
    <div class="taskbar"><i class="start"></i><i></i><i></i><i></i><i></i><i></i><i></i><i></i><i class="lit"></i><i></i></div>
</body>
</html>
```

FILE: styles.css
```css
* {
    box-sizing: border-box;
}
body {
    margin: 0;
    min-height: 100vh;
    display: flex;
    flex-direction: column;
    background: #fff;
    color: #000;
    font-family: "Noto Sans", "Open Sans", sans-serif;
    font-size: 11px;
    line-height: 16px;
    overflow: hidden;
}
button {
    display: flex;
    align-items: center;
    justify-content: center;
    flex: none;
    margin: 0;
    padding: 0;
    border: 0;
    background: none;
    font: inherit;
    color: inherit;
}
input {
    font: inherit;
    border: 0;
    padding: 0;
    min-width: 0;
}
svg {
    display: block;
    flex: none;
}
.defs {
    position: absolute;
}
h1, h2, h3 {
    margin: 0;
    font-size: 11px;
    font-weight: normal;
}
.ic {
    width: 20px;
    height: 20px;
}
.car {
    width: 6px;
    height: 4px;
    color: #999;
}
.car.dark {
    color: #333;
}
.up {
    transform: rotate(180deg);
}
.off {
    color: #c6c6c6;
}

/* menu bar */
.menubar {
    display: flex;
    align-items: center;
    height: 28px;
    background: #f7f7f7;
    border-bottom: 1px solid #777;
}
.menus {
    display: flex;
    align-items: center;
    height: 28px;
    width: 516px;
    padding: 0 8px 2px 12px;
    border-right: 1px solid #777;
    border-bottom: 1px solid #000;
}
.logo {
    display: flex;
    align-items: center;
    gap: 3px;
    width: 144px;
    height: 27px;
    margin-bottom: -2px;
    padding-left: 4px;
    border: solid #999;
    border-width: 0 1px 1px;
    background: linear-gradient(135deg, #fff 50%, #dedede);
    color: #da291c;
    font-family: "Liberation Sans", sans-serif;
    font-size: 14px;
    font-style: italic;
}
.logo span {
    padding-top: 4px;
}
.menus nav {
    display: flex;
    gap: 16px;
    flex: 1;
    padding-left: 28px;
}
.quick {
    display: flex;
    align-items: center;
    height: 24px;
    padding: 0 0 3px 16px;
}
.quick .car {
    margin: 0 7px 0 6px;
}
.quick .gap {
    margin-right: 6px;
}
.doc-name {
    flex: 1;
    padding: 0 0 2px 75px;
}
.search {
    display: flex;
    align-items: center;
    gap: 3px;
    height: 23px;
    width: 201px;
    margin-bottom: 4px;
    padding: 0 3px;
    border: 1px solid #bbb;
}
.search input {
    flex: 1;
    height: 18px;
    background: #ebedf2;
}
.search input::placeholder {
    color: #666;
}
.app-buttons {
    display: flex;
    align-items: center;
    gap: 12px;
    padding: 0 4px 3px 11px;
}
.app-buttons .car {
    margin: 0 -1px;
}

/* side toolbars */
.workspace {
    display: flex;
    flex: 1;
}
.tools {
    flex: none;
    width: 48px;
    background: #f7f7f7;
    color: #c4c4c4;
}
.tools button {
    justify-content: flex-start;
    width: 100%;
    height: 26px;
    padding-left: 7px;
}
.tools.right button {
    padding-left: 9px;
}
.tools button::after {
    content: "";
    margin-left: 8px;
    border: 3px solid transparent;
    border-top-color: #888;
    border-bottom-width: 0;
}
.tools .solo::after,
.tools .more::after {
    display: none;
}
.tools .pale {
    filter: grayscale(1);
    opacity: .6;
}
.grip {
    height: 14px;
    padding-top: 3px;
}
.grip::before {
    content: "";
    display: block;
    height: 3px;
    margin: 0 3px 0 4px;
    background: repeating-linear-gradient(90deg, #aaa 0 2px, transparent 2px 4px);
}
.tools hr {
    height: 8px;
    margin: 0 2px 0 6px;
    border: 0;
    background: linear-gradient(#888, #888) 0 2px / 100% 1px no-repeat;
}
.tools.right hr {
    margin: 0 0 0 8px;
}
.tools .wide {
    margin-left: 0;
    background-position: 0 7px;
}
.tools.right .more {
    justify-content: center;
    height: 26px;
    padding: 2px 0 0 4px;
}

/* document window */
.doc {
    display: flex;
    flex-direction: column;
    flex: 1;
    min-width: 0;
    margin-bottom: 24px;
    padding: 0 7px 8px 6px;
    border: solid #111;
    border-width: 2px 1px 1px 2px;
    border-radius: 6px 6px 0 0;
    background: linear-gradient(#99b4d1, #b9d1ea 28px);
    box-shadow: inset -1px -1px #3bc3de;
}
.title {
    display: flex;
    align-items: center;
    gap: 1px;
    height: 28px;
    padding: 4px 0 0 1px;
}
.title h1 {
    flex: 1;
}
.win-buttons {
    display: flex;
}
.win-buttons button {
    width: 30px;
    height: 17px;
    border: 1px solid #5b7392;
    border-radius: 2px;
    background: linear-gradient(#cfdeee, #a9c1dd 50%, #94b1d2 50%, #b5cde8);
}
.win-buttons .lone {
    margin-right: 3px;
}
.win-buttons .max {
    margin: 0 3px;
}
.win-buttons .shut {
    border-color: #5e1712;
    background: linear-gradient(#e5a89d, #d2705f 50%, #b9341d 50%, #cf6a4f);
}
.split {
    position: relative;
    display: flex;
    flex: 1;
}

/* property panel */
.panel {
    position: relative;
    display: flex;
    flex-direction: column;
    flex: none;
    width: 238px;
    border-right: 1px solid #888;
    background: #f7f7f7;
}
.handle {
    display: flex;
    align-items: center;
    justify-content: center;
    height: 16px;
    margin: 3px 3px 4px 0;
    border: solid #aaa;
    border-width: 1px 0;
}
.handle i, .dot, .splitter i {
    width: 6px;
    height: 6px;
    border: 1px solid #888;
    border-radius: 50%;
    background: #ccc;
}
.tabs {
    display: flex;
    margin-right: 3px;
    background: linear-gradient(#aaa, #aaa) 0 100% / 100% 1px no-repeat;
}
.tabs button {
    width: 40px;
    height: 25px;
    border: solid #999;
    border-width: 1px 1px 1px 0;
    background: #d2d2d2;
}
.tabs .on {
    border-bottom-color: #f7f7f7;
    background: #f7f7f7;
}
.feature {
    display: flex;
    align-items: center;
    gap: 5px;
    height: 35px;
    padding: 0 9px 0 7px;
}
.feature h2 {
    flex: 1;
    font-weight: bold;
}
.confirm {
    display: flex;
    gap: 15px;
    height: 28px;
    padding: 4px 7px;
}
.confirm button {
    height: 12px;
}
.mode {
    display: flex;
    justify-content: center;
    height: 29px;
    margin-right: 3px;
    padding: 0 0 7px 2px;
    border-bottom: 1px solid #aaa;
    color: #444;
}
.mode button {
    width: 59px;
    border: 1px solid #889;
    border-left: 0;
    background: #f0f1f5;
}
.mode .on {
    width: 60px;
    border: 1px solid #4b5866;
    background: #b5c4d5;
}
.scroll {
    display: flex;
    flex: 1;
}
.groups {
    flex: 1;
    padding: 1px 3px 0;
}
.group {
    height: 76px;
    border-top: 1px solid #aaa;
}
.items {
    height: auto;
}
.group h3 {
    display: flex;
    align-items: center;
    justify-content: space-between;
    height: 27px;
    padding: 0 2px 0 4px;
    color: #444;
    font-weight: 600;
}
.types {
    display: flex;
    padding-left: 13px;
}
.types button {
    width: 38px;
    height: 38px;
    border: 1px solid #999;
    background: #fff;
}
.types svg {
    width: 28px;
    height: 28px;
}
.types .on {
    border-color: #444;
    background: #a5a5a5;
}
.types .on svg {
    opacity: .75;
}
.types .flat {
    width: 37px;
    border-color: transparent;
    background: none;
}
.pick {
    display: flex;
    align-items: flex-start;
    gap: 8px;
    padding: 0 13px 0 6px;
}
.pick .ic {
    margin-top: 2px;
}
#edges {
    flex: 1;
    min-width: 0;
    height: 337px;
    margin: 0;
    padding: 0;
    border: 2px solid #5db0e6;
    border-radius: 0;
    background: #cfe4f7;
    color: #000;
    font: inherit;
    outline: none;
    overflow: hidden;
}
#edges option {
    min-height: 16px;
    padding: 0 1px;
    line-height: 16px;
}
#edges option:checked {
    background: linear-gradient(#3399ff, #3399ff);
    -webkit-text-fill-color: #fff;
}
.dot {
    display: block;
    margin: 2px auto 0 113px;
}
.bar {
    display: flex;
    flex-direction: column;
    align-items: center;
    width: 16px;
    margin-right: 3px;
    padding: 8px 0 6px;
    border-left: 1px solid #ddd;
    background: #f0f0f0;
}
.thumb {
    display: flex;
    align-items: center;
    justify-content: center;
    width: 15px;
    height: 238px;
    margin: 6px 0 auto;
    border: 1px solid #999;
    border-radius: 2px;
    background: linear-gradient(90deg, #f5f5f5, #e3e3e3 45%, #c4c4c8);
}
.thumb i {
    width: 7px;
    height: 8px;
    background: repeating-linear-gradient(#555 0 1px, #ddd 1px 3px);
}
.splitter {
    position: absolute;
    top: 280px;
    right: -9px;
    z-index: 1;
    width: 9px;
    height: 40px;
    border: 1px solid #888;
    border-left: 0;
    background: #f7f7f7;
}

/* graphics area */
.view {
    position: relative;
    flex: 1;
    min-width: 0;
    background: #c4c8d3;
    overflow: hidden;
}
.model {
    position: absolute;
    top: 0;
    left: 0;
    width: 100%;
    height: 100%;
}
.axes {
    font-family: "Liberation Sans", sans-serif;
    font-size: 10px;
}
.hud {
    position: relative;
    display: grid;
    grid-template-columns: 1fr auto 1fr;
    align-items: center;
    height: 32px;
}
.tree {
    display: flex;
    align-items: center;
    gap: 3px;
    padding-left: 6px;
}
.tree .arrow {
    width: 5px;
    height: 8px;
    margin-right: 8px;
}
.heads {
    display: flex;
    align-items: center;
    gap: 6px;
    padding-right: 3px;
}
.heads .car {
    margin: 0 3px 0 -1px;
    color: #8a8e96;
}
.callout {
    position: absolute;
    top: 342px;
    left: 219px;
    display: flex;
    align-items: center;
    width: 96px;
    height: 26px;
    border: 1px solid #000;
    outline: 1px solid #fff;
    background: #fff;
}
.callout label {
    flex: none;
    width: 47px;
    height: 24px;
    padding: 4px 0 0 5px;
    border-right: 1px solid #000;
    background: #f3f3f3;
}
.callout input {
    flex: 1;
    padding-left: 2px;
}
.callout i {
    position: absolute;
    right: -4px;
    width: 7px;
    height: 7px;
    border: 1px solid #000;
    border-radius: 50%;
    background: #ddd;
}
.accept, .reject {
    position: absolute;
}
.accept {
    top: 7px;
    right: 51px;
}
.reject {
    top: 36px;
    right: 11px;
}
.taskpane {
    position: absolute;
    top: 30px;
    right: -8px;
    border: 1px solid #777;
    border-right: 0;
}
.taskpane button {
    width: 24px;
    height: 24px;
    background: #d5d5d5;
}
.taskpane button + button {
    border-top: 1px solid #888;
}
.taskpane .on {
    height: 22px;
    background: #f7f7f7;
}

/* sheet tabs */
.sheets {
    display: flex;
    height: 15px;
    border-top: 1px solid #888;
    border-right: 1px solid #8aa;
    background: #f7f7f7;
}
.steps {
    display: flex;
    padding: 0 2px 0 1px;
}
.steps button {
    width: 16px;
    border: 1px solid #999;
    background: #b8b8b8;
}
.steps svg {
    width: 12px;
    height: 12px;
    fill: #999;
    stroke: #888;
}
.sheet {
    width: 109px;
    padding-right: 7px;
    border: solid #999;
    border-width: 0 1px;
    background: #d2d2d2;
}
.sheet.on {
    width: 56px;
    padding: 0;
    border: 0;
    background: none;
    font-weight: bold;
}

/* status bar */
.status {
    display: flex;
    align-items: center;
    height: 19px;
    padding: 0 0 0 2px;
    border-top: 1px solid #888;
    background: #f7f7f7;
}
.hint {
    flex: 1;
}
.cell {
    padding: 0 6px 0 4px;
    border-left: 1px solid #ccc;
}
.cell.empty {
    width: 8px;
    height: 16px;
    padding: 0;
}
.cell + .cell.empty {
    width: 16px;
}
.units {
    gap: 12px;
    width: 157px;
    justify-content: flex-start;
    padding-left: 28px;
    color: #aaa;
}
.taskbar {
    display: flex;
    gap: 2px;
    height: 5px;
    border-top: 1px solid #456;
    background: linear-gradient(90deg, #6e93b8, #a9c8e8 50%, #b9d3ee 82%, #7d93b3 85%, #8b9dba);
}
.taskbar i {
    width: 60px;
    border: 1px solid #4d6a88;
    border-bottom: 0;
    border-radius: 2px 2px 0 0;
    background: #d6e4f2;
}
.taskbar .start {
    width: 120px;
    border: 0;
    background: linear-gradient(90deg, #7396bb, #9dbcd9);
}
.taskbar .lit {
    background: #53c3ee;
}
```
